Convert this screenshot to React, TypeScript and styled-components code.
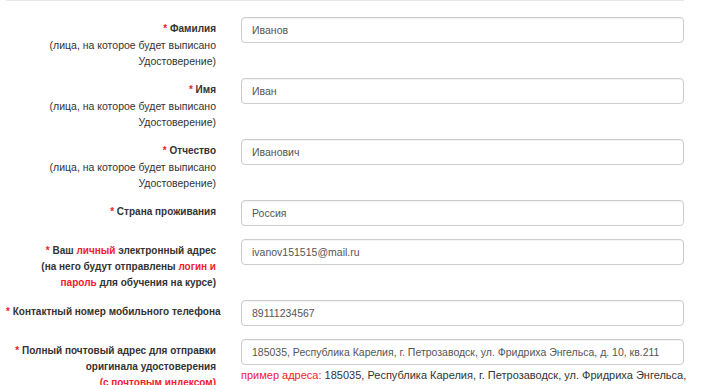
import React from 'react'
import styled, { createGlobalStyle } from 'styled-components'

const GlobalStyle = createGlobalStyle`
  body {
    margin: 0;
    background: #fff;
    font-family: "Liberation Sans", Arial, sans-serif;
    color: #333;
  }
`

const Form = styled.div`
  margin-left: 6px;
  width: 678px;
  border-top: 1px solid #e8e8e8;
  padding-top: 16px;
`

const Row = styled.div`
  display: grid;
  grid-template-columns: 210px 443px;
  column-gap: 25px;
  align-items: start;
  margin-bottom: 13px;
`

const Label = styled.div`
  text-align: right;
  font-size: 10px;
  font-weight: bold;
  line-height: 16px;
  padding-top: 4px;
  margin-bottom: -4px;
  color: #333;
  white-space: nowrap;
`

const Note = styled.span`
  font-weight: normal;
  font-size: 10.5px;
  vertical-align: top;
`

const Red = styled.span`
  color: #f0212b;
`

const Field = styled.div`
  display: flex;
  flex-direction: column;
`

const Input = styled.div`
  box-sizing: border-box;
  height: 26px;
  border: 1px solid #ccc;
  border-radius: 4px;
  padding: 0 10px;
  display: flex;
  align-items: center;
  font-size: 10.5px;
  color: #555;
  box-shadow: inset 0 1px 1px rgba(0, 0, 0, 0.05);
  white-space: nowrap;
  overflow: hidden;
`

const Hint = styled.div`
  font-size: 11px;
  line-height: 16px;
  margin-top: 2px;
  color: #333;
  white-space: nowrap;
`

type RowData = {
  label: React.ReactNode
  value: string
  hint?: React.ReactNode
}

const Star = () => <Red>*</Red>

const personNote = (
  <Note>
    <br />
    (лица, на которое будет выписано
    <br />
    Удостоверение)
  </Note>
)

const rows: RowData[] = [
  {
    label: (
      <>
        <Star /> Фамилия
        {personNote}
      </>
    ),
    value: 'Иванов',
  },
  {
    label: (
      <>
        <Star /> Имя
        {personNote}
      </>
    ),
    value: 'Иван',
  },
  {
    label: (
      <>
        <Star /> Отчество
        {personNote}
      </>
    ),
    value: 'Иванович',
  },
  {
    label: (
      <>
        <Star /> Страна проживания
      </>
    ),
    value: 'Россия',
  },
  {
    label: (
      <>
        <Star /> Ваш <Red>личный</Red> электронный адрес
        <br />
        (на него будут отправлены <Red>логин и</Red>
        <br />
        <Red>пароль</Red> для обучения на курсе)
      </>
    ),
    value: 'ivanov151515@mail.ru',
  },
  {
    label: (
      <>
        <Star /> Контактный номер мобильного телефона
      </>
    ),
    value: '89111234567',
  },
  {
    label: (
      <>
        <Star /> Полный почтовый адрес для отправки
        <br />
        оригинала удостоверения
        <br />
        <Red>(с почтовым индексом)</Red>
      </>
    ),
    value: '185035, Республика Карелия, г. Петрозаводск, ул. Фридриха Энгельса, д. 10, кв.211',
    hint: (
      <>
        <Red>пример адреса:</Red> 185035, Республика Карелия, г. Петрозаводск, ул. Фридриха Энгельса,
      </>
    ),
  },
]

export default function App() {
  return (
    <>
      <GlobalStyle />
      <Form>
        {rows.map((r, i) => (
          <Row key={i}>
            <Label>{r.label}</Label>
            <Field>
              <Input>{r.value}</Input>
              {r.hint && <Hint>{r.hint}</Hint>}
            </Field>
          </Row>
        ))}
      </Form>
    </>
  )
}
